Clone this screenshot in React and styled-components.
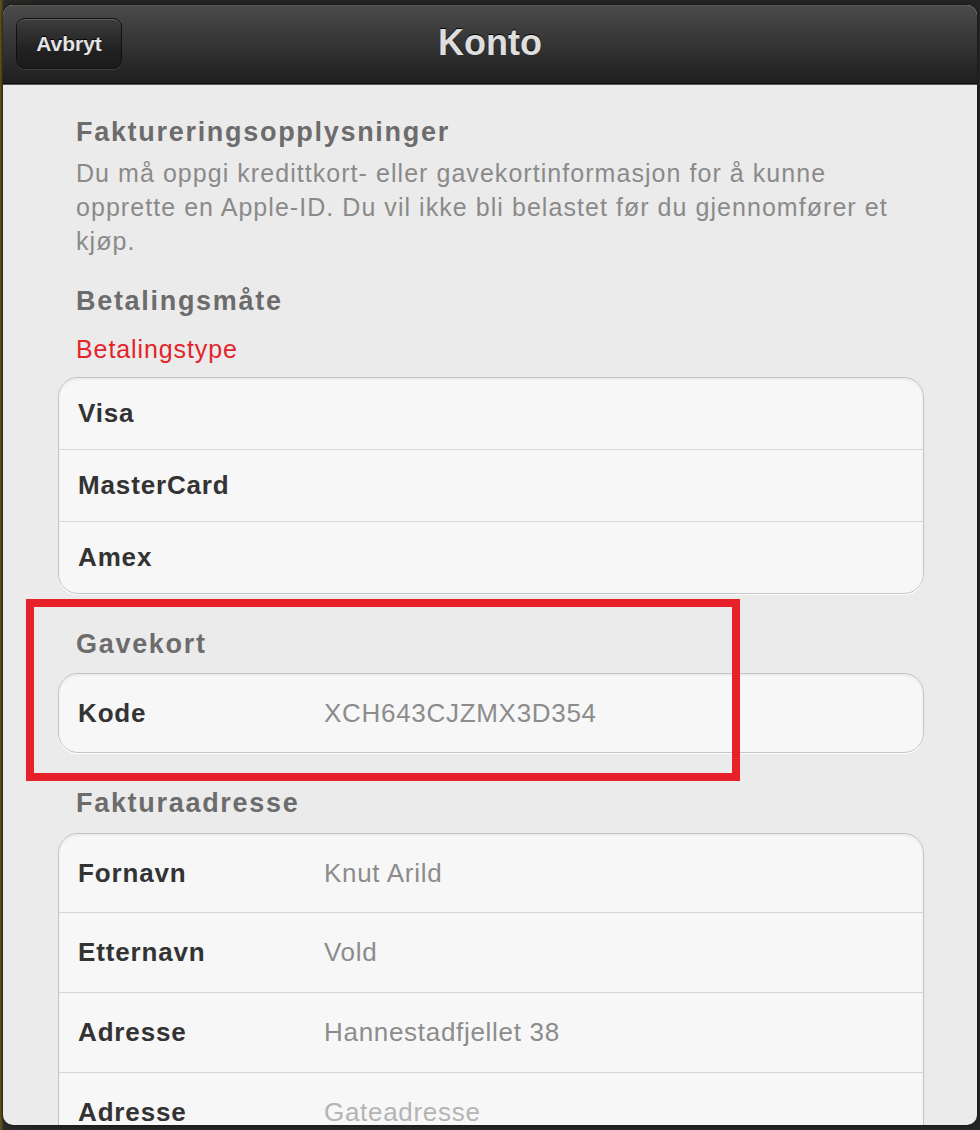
import React from 'react';
import styled, { createGlobalStyle } from 'styled-components';

// Page backdrop
const GlobalStyle = createGlobalStyle`
  html, body {
    margin: 0;
    padding: 0;
    height: 100%;
  }
  body {
    background: linear-gradient(90deg, #6b5a1c 0px, #2c2a24 4px, #262626 40px, #262626 100%);
    font-family: "Liberation Sans", Arial, sans-serif;
    overflow: hidden;
  }
`;

const Sheet = styled.div`
  margin: 5px 3px 0;
  height: 1120px;
  border-radius: 10px;
  overflow: hidden;
  background: #ebebeb;
  display: flex;
  flex-direction: column;
  box-shadow: 0 0 4px rgba(0, 0, 0, 0.6);
`;

const NavBar = styled.div`
  position: relative;
  height: 78px;
  flex-shrink: 0;
  display: flex;
  align-items: center;
  justify-content: center;
  background: linear-gradient(#575757 0px, #4a4a4a 2px, #343434 40px, #1f1f1f 100%);
  border-bottom: 1px solid #0c0c0c;
  box-shadow: 0 1px 0 #5a5a5a;
`;

const CancelButton = styled.button`
  position: absolute;
  left: 13px;
  top: 13px;
  width: 106px;
  height: 51px;
  border-radius: 9px;
  border: 1px solid #101010;
  background: linear-gradient(#3d3d3d, #222 60%, #1b1b1b);
  box-shadow: inset 0 1px 0 rgba(255, 255, 255, 0.18), 0 1px 0 rgba(255, 255, 255, 0.12);
  color: #e4e4e4;
  font-family: "Liberation Sans", Arial, sans-serif;
  font-weight: bold;
  font-size: 21px;
  text-shadow: 0 -1px 0 #000;
  padding: 0;
`;

const Title = styled.h1`
  margin: 0;
  font-size: 36px;
  font-weight: bold;
  color: #dedede;
  text-shadow: 0 -1px 0 #000;
  padding-bottom: 2px;
`;

const Content = styled.div`
  padding: 31px 53px 0 55px;
  display: flex;
  flex-direction: column;
`;

const SectionTitle = styled.h2`
  margin: ${(p) => p.$top || 0}px 0 0;
  padding-left: 18px;
  font-size: 27px;
  line-height: 34px;
  font-weight: bold;
  color: #6c6c6c;
  letter-spacing: 1.7px;
`;

const Intro = styled.p`
  margin: 7px 0 0;
  padding-left: 18px;
  font-size: 25px;
  line-height: 34px;
  color: #8a8a8a;
  letter-spacing: 1.05px;
`;

const Hint = styled.div`
  margin-top: 14px;
  padding-left: 18px;
  font-size: 25px;
  line-height: 34px;
  color: #e3242b;
  letter-spacing: 0.9px;
`;

const Group = styled.div`
  margin-top: ${(p) => p.$top || 12}px;
  background: #f7f7f7;
  border: 1px solid #c4c4c4;
  border-radius: 20px;
  box-shadow: inset 0 2px 2px rgba(0, 0, 0, 0.05), 0 1px 0 #ffffff;
`;

const Row = styled.div`
  height: ${(p) => p.$h}px;
  display: flex;
  align-items: center;
  padding-left: 19px;
  & + & {
    border-top: 1px solid #d6d6d6;
  }
`;

const Label = styled.span`
  width: 246px;
  flex-shrink: 0;
  font-size: 26px;
  font-weight: bold;
  color: #333;
  letter-spacing: 0.85px;
`;

const Value = styled.span`
  font-size: 26px;
  color: ${(p) => (p.$placeholder ? '#b4b4b4' : '#8c8c8c')};
  letter-spacing: 0.7px;
`;

const GiftSection = styled.div`
  position: relative;
  margin-top: 33px;
  display: flex;
  flex-direction: column;
`;

// Red annotation frame drawn over the gift card section
const Highlight = styled.div`
  position: absolute;
  left: -32px;
  top: -28px;
  width: 714px;
  height: 182px;
  box-sizing: border-box;
  border: 8px solid #e8202a;
  pointer-events: none;
`;

const cards = ['Visa', 'MasterCard', 'Amex'];

const address = [
  { label: 'Fornavn', value: 'Knut Arild' },
  { label: 'Etternavn', value: 'Vold' },
  { label: 'Adresse', value: 'Hannestadfjellet 38' },
  { label: 'Adresse', value: 'Gateadresse', placeholder: true },
];

const App = () => {
  return (
    <>
      <GlobalStyle />
      <Sheet>
        <NavBar>
          <CancelButton>Avbryt</CancelButton>
          <Title>Konto</Title>
        </NavBar>

        <Content>
          <SectionTitle>Faktureringsopplysninger</SectionTitle>
          <Intro>
            Du må oppgi kredittkort- eller gavekortinformasjon for å kunne<br />
            opprette en Apple-ID. Du vil ikke bli belastet før du gjennomfører et<br />
            kjøp.
          </Intro>

          <SectionTitle $top={26}>Betalingsmåte</SectionTitle>
          <Hint>Betalingstype</Hint>
          <Group $top={11}>
            {cards.map((c) => (
              <Row key={c} $h={71}>
                <Label>{c}</Label>
              </Row>
            ))}
          </Group>

          {/* Gift card */}
          <GiftSection>
            <SectionTitle>Gavekort</SectionTitle>
            <Group $top={12}>
              <Row $h={78}>
                <Label>Kode</Label>
                <Value>XCH643CJZMX3D354</Value>
              </Row>
            </Group>
            <Highlight />
          </GiftSection>

          <SectionTitle $top={33}>Fakturaadresse</SectionTitle>
          <Group $top={13}>
            {address.map((a, i) => (
              <Row key={i} $h={i === 0 ? 78 : 79}>
                <Label>{a.label}</Label>
                <Value $placeholder={a.placeholder}>{a.value}</Value>
              </Row>
            ))}
          </Group>
        </Content>
      </Sheet>
    </>
  );
};

export default App;
